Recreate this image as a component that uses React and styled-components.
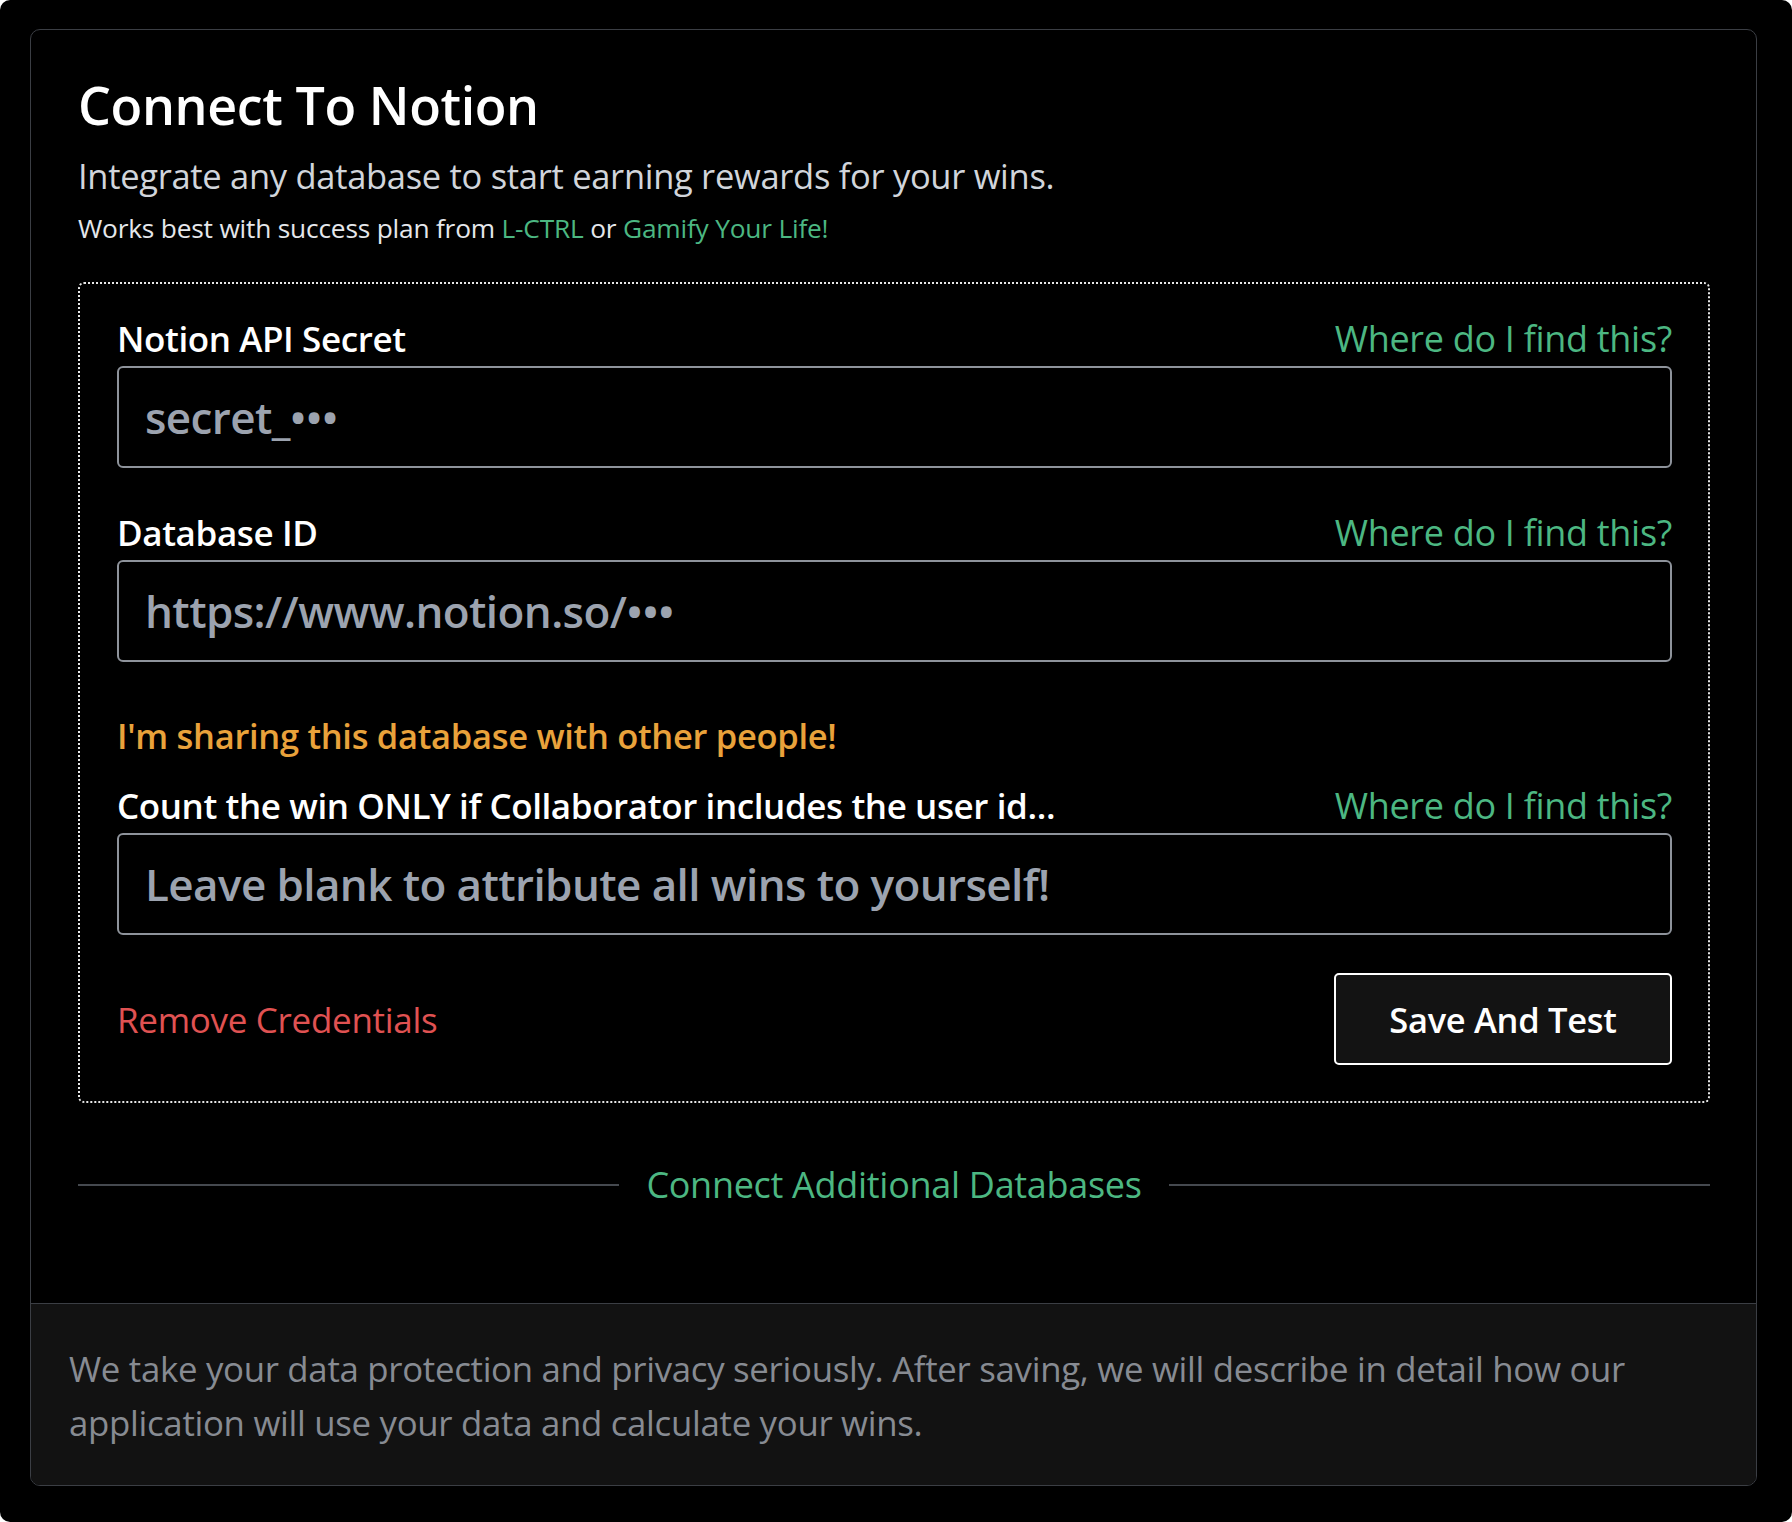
import React from "react";
import styled, { createGlobalStyle } from "styled-components";

const Global = createGlobalStyle`
  html, body { margin: 0; padding: 0; background: #ffffff; }
  body { font-family: "Open Sans", "Noto Sans", sans-serif; }
  * { box-sizing: border-box; }
`;

const Page = styled.div`
  background: #000;
  border-radius: 10px;
  min-height: 1522px;
  padding: 29px 35px 36px 30px;
`;

const Card = styled.div`
  border: 1px solid #3b3e44;
  border-radius: 10px;
  overflow: hidden;
  display: flex;
  flex-direction: column;
  height: 1457px;
`;

const Body = styled.div`
  flex: 1;
  padding: 44px 46px 0 47px;
  display: flex;
  flex-direction: column;
`;

const Title = styled.h1`
  margin: 0;
  color: #fff;
  font-weight: 600;
  font-size: 52px;
  line-height: 62px;
  letter-spacing: -0.4px;
`;

const Subtitle = styled.p`
  margin: 15px 0 0;
  color: #d1d5db;
  font-size: 34.5px;
  line-height: 50px;
  letter-spacing: -0.3px;
`;

const Note = styled.p`
  margin: 5px 0 0;
  color: #e5e7eb;
  font-size: 26.3px;
  line-height: 44px;
  letter-spacing: -0.2px;
`;

const Link = styled.span`
  color: #4cb782;
`;

const Box = styled.div`
  margin-top: 32px;
  border: 2px dotted #e8e8e8;
  border-radius: 6px;
  padding: 27px 36px 36px 37px;
  display: flex;
  flex-direction: column;
`;

const Field = styled.div`
  display: flex;
  flex-direction: column;
  margin-top: ${(p) => p.$mt || 0}px;
`;

const LabelRow = styled.div`
  display: flex;
  justify-content: space-between;
  align-items: baseline;
  height: 55px;
`;

const Label = styled.label`
  color: #fff;
  font-weight: 600;
  font-size: 35px;
  line-height: 55px;
  letter-spacing: -0.4px;
`;

const Help = styled.a`
  color: #4cb782;
  font-size: 36px;
  line-height: 55px;
  letter-spacing: -0.3px;
  text-decoration: none;
`;

const Input = styled.input`
  height: 102px;
  width: 100%;
  background: #000;
  border: 2px solid #8e939b;
  border-radius: 6px;
  padding: 0 26px;
  color: #fff;
  font-family: inherit;
  font-size: 44px;
  font-weight: 600;
  letter-spacing: -0.6px;
  outline: none;
  &::placeholder { color: #9ca3af; opacity: 1; }
`;

const Warn = styled.div`
  margin-top: 46px;
  color: #e9a23b;
  font-weight: 600;
  font-size: 34.5px;
  line-height: 56px;
  letter-spacing: -0.3px;
`;

const Actions = styled.div`
  margin-top: 38px;
  display: flex;
  justify-content: space-between;
  align-items: center;
`;

const Danger = styled.button`
  background: none;
  border: none;
  padding: 0;
  color: #e05252;
  font-family: inherit;
  font-size: 35px;
  letter-spacing: -0.3px;
  cursor: pointer;
`;

const SaveButton = styled.button`
  width: 338px;
  height: 92px;
  background: #131313;
  border: 2px solid #fff;
  border-radius: 5px;
  color: #fff;
  font-family: inherit;
  font-weight: 600;
  font-size: 34.5px;
  letter-spacing: -0.3px;
  cursor: pointer;
`;

const Divider = styled.div`
  margin-top: 57px;
  display: flex;
  align-items: center;
  gap: 27px;
  &::before, &::after {
    content: "";
    flex: 1;
    height: 2px;
    background: #45494f;
  }
`;

const DividerText = styled.a`
  color: #4cb782;
  font-size: 36px;
  line-height: 50px;
  letter-spacing: -0.3px;
  text-decoration: none;
`;

const Footer = styled.div`
  background: #121212;
  border-top: 1px solid #3b3e44;
  padding: 38px 38px 35px 38px;
  color: #878b92;
  font-size: 34.8px;
  line-height: 54px;
  letter-spacing: -0.3px;
`;

export default function App() {
  return (
    <>
      <Global />
      <Page>
        <Card>
          <Body>
            <Title>Connect To Notion</Title>
            <Subtitle>Integrate any database to start earning rewards for your wins.</Subtitle>
            <Note>
              Works best with success plan from <Link>L-CTRL</Link> or{" "}
              <Link>Gamify Your Life!</Link>
            </Note>
            <Box>
              <Field>
                <LabelRow>
                  <Label>Notion API Secret</Label>
                  <Help>Where do I find this?</Help>
                </LabelRow>
                <Input placeholder="secret_•••" />
              </Field>
              <Field $mt={37}>
                <LabelRow>
                  <Label>Database ID</Label>
                  <Help>Where do I find this?</Help>
                </LabelRow>
                <Input placeholder="https://www.notion.so/•••" />
              </Field>
              <Warn>I'm sharing this database with other people!</Warn>
              <Field $mt={14}>
                <LabelRow>
                  <Label>Count the win ONLY if Collaborator includes the user id...</Label>
                  <Help>Where do I find this?</Help>
                </LabelRow>
                <Input placeholder="Leave blank to attribute all wins to yourself!" />
              </Field>
              <Actions>
                <Danger>Remove Credentials</Danger>
                <SaveButton>Save And Test</SaveButton>
              </Actions>
            </Box>
            <Divider>
              <DividerText>Connect Additional Databases</DividerText>
            </Divider>
          </Body>
          <Footer>
            We take your data protection and privacy seriously. After saving, we will describe in detail how our application will use your data and calculate your wins.
          </Footer>
        </Card>
      </Page>
    </>
  );
}
